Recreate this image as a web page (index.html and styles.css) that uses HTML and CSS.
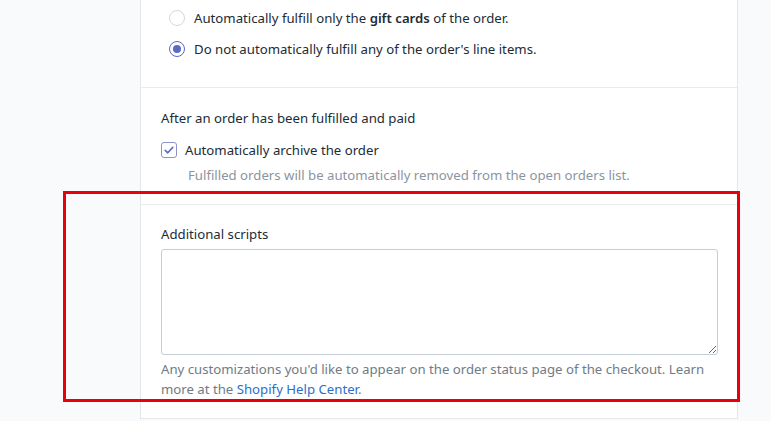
FILE: index.html
```html
<!DOCTYPE html>
<html lang="en">
<head>
    <meta charset="UTF-8">
    <meta name="viewport" content="width=device-width, initial-scale=1.0">
    <title>Checkout settings</title>
    <link rel="stylesheet" href="styles.css">
</head>
<body>
    <div class="card">
        <div class="section section-fulfill">
            <label class="choice">
                <span class="radio"></span>
                <span>Automatically fulfill only the <b>gift cards</b> of the order.</span>
            </label>
            <label class="choice">
                <span class="radio checked"></span>
                <span>Do not automatically fulfill any of the order's line items.</span>
            </label>
        </div>

        <div class="section section-archive">
            <p class="heading">After an order has been fulfilled and paid</p>
            <label class="check-row">
                <span class="checkbox">
                    <svg width="12" height="12" viewBox="0 0 12 12">
                        <path d="M2.2 6.3 L4.8 8.8 L9.8 3.4" fill="none" stroke="#5c6ac4" stroke-width="1.6" stroke-linecap="round" stroke-linejoin="round"/>
                    </svg>
                </span>
                <span>Automatically archive the order</span>
            </label>
            <p class="check-help">Fulfilled orders will be automatically removed from the open orders list.</p>
        </div>

        <div class="section section-scripts">
            <p class="label">Additional scripts</p>
            <textarea class="scripts"></textarea>
            <p class="help">Any customizations you'd like to appear on the order status page of the checkout. Learn more at the <a href="#">Shopify Help Center</a>.</p>
        </div>
    </div>

    <!-- highlight box drawn over the page -->
    <div class="highlight"></div>
</body>
</html>
```

FILE: styles.css
```css
body {
    margin: 0;
    padding: 0;
    background-color: #f9fafb;
    font-family: "Noto Sans", "Open Sans", sans-serif;
    font-size: 13.2px;
    color: #212b36;
    height: 421px;
    overflow: hidden;
}

.card {
    margin-left: 140px;
    width: 596px;
    background-color: #fff;
    border: 1px solid #e4e7ea;
    border-top: none;
}

.section {
    padding: 0 20px;
    border-top: 1px solid #e9ebed;
}

.section:first-child {
    border-top: none;
}

.section-fulfill {
    padding-top: 8px;
    padding-bottom: 28px;
    padding-left: 28px;
}

.choice {
    display: flex;
    align-items: center;
    gap: 9px;
    height: 20px;
    margin-bottom: 11px;
}

.choice:last-child {
    margin-bottom: 0;
}

.radio {
    width: 14px;
    height: 14px;
    border: 1px solid #d3d8dd;
    border-radius: 50%;
    display: flex;
    align-items: center;
    justify-content: center;
    flex-shrink: 0;
}

.radio.checked {
    border-color: #5c6ac4;
}

.radio.checked::after {
    content: "";
    width: 8px;
    height: 8px;
    border-radius: 50%;
    background-color: #5c6ac4;
}

b {
    font-weight: 600;
}

.section-archive {
    padding-top: 20px;
    padding-bottom: 19px;
}

.heading {
    margin: 0 0 12px;
    line-height: 20px;
}

.check-row {
    display: flex;
    align-items: center;
    gap: 8px;
    height: 20px;
}

.checkbox {
    width: 14px;
    height: 14px;
    border: 1px solid #8c93c9;
    border-radius: 3px;
    display: flex;
    align-items: center;
    justify-content: center;
    flex-shrink: 0;
}

.check-help {
    margin: 5px 0 0 27px;
    color: #8a959f;
    line-height: 20px;
}

.section-scripts {
    padding-top: 19px;
    padding-bottom: 19px;
}

.label {
    margin: 0 0 5px;
    line-height: 20px;
}

.scripts {
    display: block;
    box-sizing: border-box;
    width: 557px;
    height: 106px;
    margin: 0;
    border: 1px solid #c4cdd5;
    border-radius: 3px;
    background-color: #fff;
}

.help {
    margin: 4px 0 0;
    color: #6f7b86;
    line-height: 20px;
}

.help a {
    color: #2c6ecb;
    text-decoration: none;
}

.highlight {
    position: absolute;
    left: 63px;
    top: 191px;
    width: 671px;
    height: 205px;
    border: 3px solid #e8000b;
}
```
